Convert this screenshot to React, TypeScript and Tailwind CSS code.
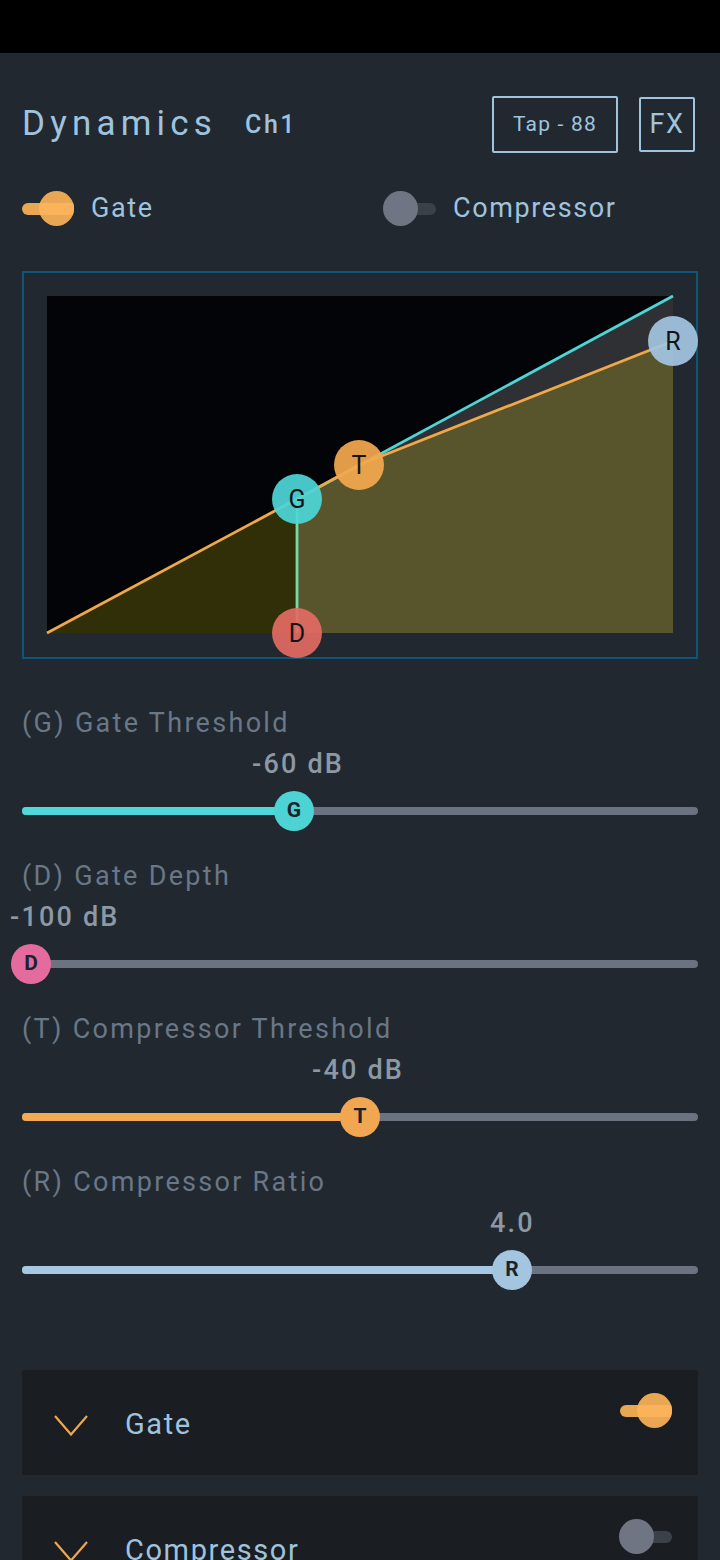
import React from "react";

type Knob = "G" | "D" | "T" | "R";

const sliders: {
  label: string;
  value: string;
  knob: Knob;
  thumb: number; // thumb centre, px from track start
  valueLeft: number; // value text left edge, px from track start
  fill: string;
  thumbBg: string;
}[] = [
  { label: "(G) Gate Threshold", value: "-60 dB", knob: "G", thumb: 272, valueLeft: 230, fill: "bg-[#4fd8d8]", thumbBg: "bg-[#4dd3d3]" },
  { label: "(D) Gate Depth", value: "-100 dB", knob: "D", thumb: 9, valueLeft: -12, fill: "bg-transparent", thumbBg: "bg-[#e46b9e]" },
  { label: "(T) Compressor Threshold", value: "-40 dB", knob: "T", thumb: 338, valueLeft: 290, fill: "bg-[#f2aa55]", thumbBg: "bg-[#f1a752]" },
  { label: "(R) Compressor Ratio", value: "4.0", knob: "R", thumb: 490, valueLeft: 468, fill: "bg-[#a6c8e2]", thumbBg: "bg-[#a3c5e0]" },
];

function Toggle({ on }: { on: boolean }) {
  if (on) {
    return (
      <div className="relative w-[52px] h-[35px] shrink-0">
        <div className="absolute left-0 top-[11.5px] w-[50px] h-[12px] rounded-full bg-[#e9a653]" />
        <div className="absolute left-[17px] top-0 w-[35px] h-[35px] rounded-full bg-[#e9a653] overflow-hidden">
          <div className="mt-[11.5px] h-[12px] bg-[#fbb35b]" />
        </div>
      </div>
    );
  }
  return (
    <div className="relative w-[53px] h-[35px] shrink-0">
      <div className="absolute left-[20px] right-0 top-[11.5px] h-[12px] rounded-full bg-[#3b4148]" />
      <div className="absolute left-0 top-0 w-[35px] h-[35px] rounded-full bg-[#6f7582]" />
    </div>
  );
}

function Chevron() {
  return (
    <svg width="34" height="21" viewBox="0 0 34 21" fill="none" className="shrink-0">
      <path d="M1 1 L17 19.5 L33 1" stroke="#f0a64f" strokeWidth="2.2" />
    </svg>
  );
}

function Curve() {
  // plot area 626 x 337; G, T, R, D are the control points
  const G = [250, 203];
  const T = [312, 169];
  const R = [626, 45];
  const D = [250, 337];
  const nodes: { p: number[]; c: string; t: string }[] = [
    { p: D, c: "#e16b63", t: "D" },
    { p: G, c: "#4dd5d6", t: "G" },
    { p: T, c: "#f3a84f", t: "T" },
    { p: R, c: "#a3c5e1", t: "R" },
  ];
  return (
    <svg width="626" height="337" viewBox="0 0 626 337" className="block overflow-visible">
      <rect x="0" y="0" width="626" height="337" fill="#020407" />
      <polygon points={`0,337 ${G[0]},${G[1]} ${G[0]},337`} fill="#302f07" />
      <polygon points={`${G[0]},337 ${G[0]},${G[1]} ${T[0]},${T[1]} ${R[0]},${R[1]} 626,337`} fill="#58552c" />
      <polygon points={`${T[0]},${T[1]} 626,0 ${R[0]},${R[1]}`} fill="#2f3033" />
      <line x1={G[0]} y1={G[1]} x2="626" y2="0" stroke="#4fd5d6" strokeWidth="2.8" />
      <polyline points={`0,337 ${G[0]},${G[1]} ${T[0]},${T[1]} ${R[0]},${R[1]}`} fill="none" stroke="#f0a84a" strokeWidth="2.8" />
      <line x1={G[0]} y1={G[1]} x2={D[0]} y2={D[1]} stroke="#72dba8" strokeWidth="2.8" />
      {nodes.map((n) => (
        <g key={n.t}>
          <circle cx={n.p[0]} cy={n.p[1]} r="25" fill={n.c} fillOpacity="0.93" />
          <text
            x={n.p[0]}
            y={n.p[1] + 9}
            textAnchor="middle"
            fontSize="25"
            fill="#111518"
            fontFamily="Roboto, sans-serif"
          >
            {n.t}
          </text>
        </g>
      ))}
    </svg>
  );
}

export default function App() {
  return (
    <div className="w-[720px] h-[1560px] overflow-hidden bg-[#212830] font-['Roboto',sans-serif]">
      <div className="h-[53px] bg-black" />

      <div className="px-[22px]">
        {/* Header */}
        <div className="mt-[43px] h-[57px] flex items-center justify-between">
          <div className="flex items-center">
            <span className="text-[35px] tracking-[5.2px] text-[#9fc3dd]">Dynamics</span>
            <span className="ml-[28px] text-[25px] font-medium tracking-[2.5px] text-[#9fc3dd]">Ch1</span>
          </div>
          <div className="mr-[3px] flex items-center gap-[21px]">
            <button className="w-[126px] h-[57px] border-2 border-[#a0c4de] rounded-[2px] text-[21px] tracking-[1.2px] text-[#a0c4de]">
              Tap - 88
            </button>
            <button className="w-[56px] h-[55px] border-2 border-[#a0c4de] rounded-[2px] text-[27px] tracking-[1.5px] text-[#a0c4de]">
              FX
            </button>
          </div>
        </div>

        {/* Enable toggles */}
        <div className="mt-[38px] h-[35px] flex items-center">
          <div className="w-[361px] flex items-center">
            <Toggle on />
            <span className="ml-[17px] text-[27px] tracking-[1.6px] text-[#9fc3dd]">Gate</span>
          </div>
          <div className="flex items-center">
            <Toggle on={false} />
            <span className="ml-[17px] text-[27px] tracking-[1.6px] text-[#9fc3dd]">Compressor</span>
          </div>
        </div>

        {/* Transfer curve */}
        <div className="mt-[45px] w-[676px] h-[388px] border-2 border-[#0d5677] p-[23px]">
          <Curve />
        </div>

        {/* Sliders */}
        <div className="mt-[48px]">
          {sliders.map((s) => (
            <div key={s.label} className="mb-[29px]">
              <div className="h-[32px] leading-[32px] text-[27px] tracking-[2.3px] text-[#697787] whitespace-nowrap">
                {s.label}
              </div>
              <div className="relative mt-[10px] h-[30px]">
                <span
                  className="absolute top-0 leading-[30px] text-[27px] font-medium tracking-[2.2px] text-[#8c98a4] whitespace-nowrap"
                  style={{ left: s.valueLeft }}
                >
                  {s.value}
                </span>
              </div>
              <div className="relative mt-[12px] h-[40px]">
                <div className="absolute left-0 right-0 top-[16px] h-[8px] rounded-full bg-[#6b7380]" />
                <div
                  className={`absolute left-0 top-[16px] h-[8px] rounded-full ${s.fill}`}
                  style={{ width: s.thumb }}
                />
                <div
                  className={`absolute top-0 w-[40px] h-[40px] rounded-full ${s.thumbBg} flex items-center justify-center text-[21px] font-bold text-[#1b232b]`}
                  style={{ left: s.thumb - 20 }}
                >
                  {s.knob}
                </div>
              </div>
            </div>
          ))}
        </div>

        {/* Sections */}
        <div className="mt-[80px] flex flex-col gap-[21px]">
          {[
            { name: "Gate", on: true },
            { name: "Compressor", on: false },
          ].map((sec) => (
            <div key={sec.name} className="h-[105px] bg-[#1a1d22] flex items-start pl-[32px] pr-[26px]">
              <div className="mt-[45px] h-[21px] flex items-center">
                <Chevron />
                <span className="ml-[37px] -mt-[4px] leading-[32px] text-[29px] tracking-[1.6px] text-[#9fc3dd]">
                  {sec.name}
                </span>
              </div>
              <div className="ml-auto mt-[23px]">
                <Toggle on={sec.on} />
              </div>
            </div>
          ))}
        </div>
      </div>
    </div>
  );
}
